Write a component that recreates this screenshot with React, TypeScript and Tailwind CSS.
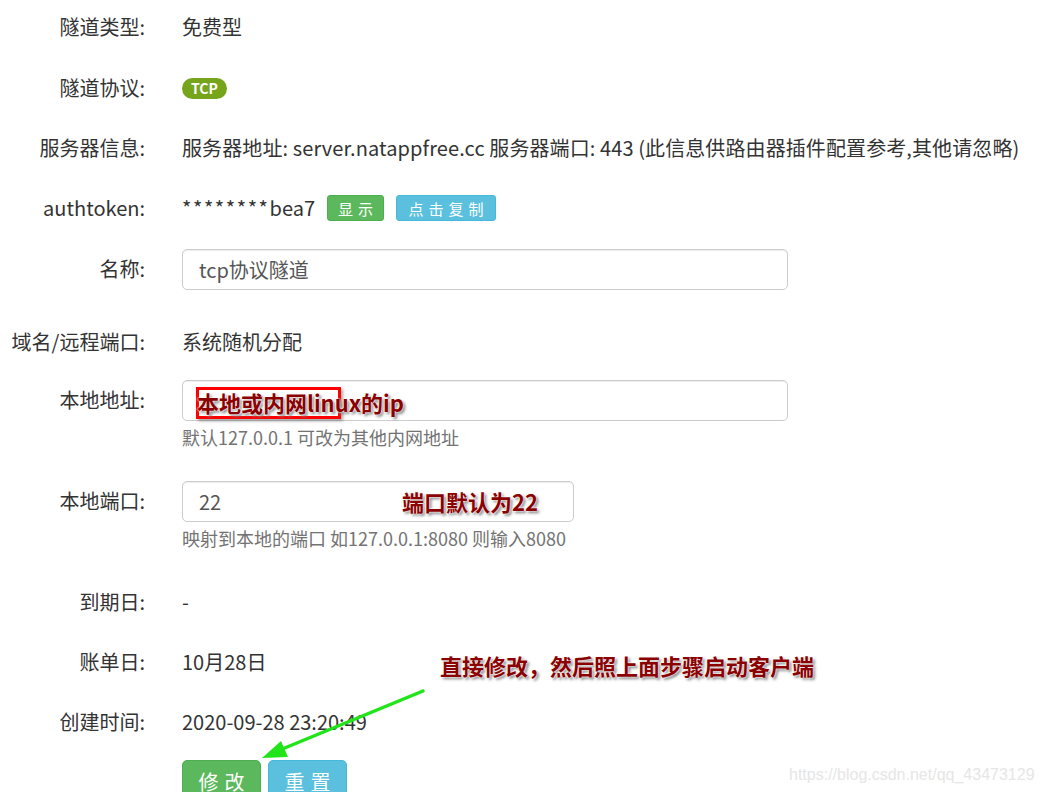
import React from 'react';

const font = { fontFamily: '"Noto Sans CJK SC", "Noto Sans", sans-serif' };

function Label({ children }: { children: React.ReactNode }) {
  return (
    <div className="w-[145px] shrink-0 h-[40px] flex items-center justify-end text-[#333] whitespace-nowrap">
      {children}
    </div>
  );
}

function Row({ label, children, className = '' }: { label: string; children: React.ReactNode; className?: string }) {
  return (
    <div className={`flex gap-[37px] ${className}`}>
      <Label>{label}</Label>
      <div className="flex-1 min-w-0">{children}</div>
    </div>
  );
}

const annot =
  'text-[#8b0000] font-bold text-[22px] leading-none whitespace-nowrap [text-shadow:0_0_2px_#fff,0_0_2px_#fff,2px_2px_3px_#777]';

export default function App() {
  return (
    <div
      className="relative w-[1042px] h-[792px] overflow-hidden bg-white text-[20px] text-[#333]"
      style={font}
    >
      <div className="pt-[7px]">
        <Row label="隧道类型:">
          <div className="h-[40px] flex items-center">免费型</div>
        </Row>

        <Row label="隧道协议:" className="mt-[21px]">
          <div className="h-[40px] flex items-center">
            <span className="inline-flex items-center justify-center h-[21px] px-[9px] rounded-full bg-[#76a51c] text-white text-[14px] font-bold leading-none">
              TCP
            </span>
          </div>
        </Row>

        <Row label="服务器信息:" className="mt-[20px]">
          <div className="h-[40px] flex items-center whitespace-nowrap tracking-[0.1px]">
            服务器地址: server.natappfree.cc 服务器端口: 443 (此信息供路由器插件配置参考,其他请忽略)
          </div>
        </Row>

        <Row label="authtoken:" className="mt-[20px]">
          <div className="h-[40px] flex items-center gap-[12px]">
            <span>
              <span className="tracking-[1.6px]">********</span>bea7
            </span>
            <button className="h-[26px] w-[57px] rounded-[3px] bg-[#5cb85c] border border-[#4cae4c] text-white text-[15px] tracking-[5px] pl-[5px] leading-none">
              显示
            </button>
            <button className="h-[26px] w-[100px] rounded-[3px] bg-[#5bc0de] border border-[#46b8da] text-white text-[15px] tracking-[5px] pl-[5px] leading-none">
              点击复制
            </button>
          </div>
        </Row>

        <Row label="名称:" className="mt-[21px]">
          <div className="w-[606px] h-[41px] border border-[#ccc] rounded-[5px] flex items-center px-[16px] text-[#555] shadow-[inset_0_1px_1px_rgba(0,0,0,0.075)]">
            tcp协议隧道
          </div>
        </Row>

        <Row label="域名/远程端口:" className="mt-[32px]">
          <div className="h-[40px] flex items-center">系统随机分配</div>
        </Row>

        <Row label="本地地址:" className="mt-[18px]">
          <div className="w-[606px] h-[41px] border border-[#ccc] rounded-[5px] shadow-[inset_0_1px_1px_rgba(0,0,0,0.075)]" />
          <div className="mt-[4px] h-[24px] text-[18px] text-[#737373] leading-[24px]">默认127.0.0.1 可改为其他内网地址</div>
        </Row>

        <Row label="本地端口:" className="mt-[32px]">
          <div className="w-[392px] h-[41px] border border-[#ccc] rounded-[5px] flex items-center px-[16px] text-[#555] shadow-[inset_0_1px_1px_rgba(0,0,0,0.075)]">
            22
          </div>
          <div className="mt-[4px] h-[24px] text-[18px] text-[#737373] leading-[24px]">
            映射到本地的端口 如127.0.0.1:8080 则输入8080
          </div>
        </Row>

        <Row label="到期日:" className="mt-[32px]">
          <div className="h-[40px] flex items-center">-</div>
        </Row>

        <Row label="账单日:" className="mt-[20px]">
          <div className="h-[40px] flex items-center">10月28日</div>
        </Row>

        <Row label="创建时间:" className="mt-[20px]">
          <div className="h-[40px] flex items-center">2020-09-28 23:20:49</div>
        </Row>

        <Row label="" className="mt-[18px]">
          <div className="flex gap-[7px]">
            <button className="w-[79px] h-[44px] rounded-[5px] bg-[#5cb85c] border border-[#4cae4c] text-white text-[20px] tracking-[6px] pl-[6px] leading-none">
              修改
            </button>
            <button className="w-[79px] h-[44px] rounded-[5px] bg-[#5bc0de] border border-[#46b8da] text-white text-[20px] tracking-[6px] pl-[6px] leading-none">
              重置
            </button>
          </div>
        </Row>
      </div>

      {/* annotations */}
      <div className="absolute left-[196px] top-[387px] w-[145px] h-[32px] border-[3px] border-[#ff0000] bg-white shadow-[2px_2px_3px_rgba(0,0,0,0.35)]" />
      <div className={`absolute left-[197px] top-[391px] ${annot}`}>本地或内网linux的ip</div>
      <div className={`absolute left-[402px] top-[490px] ${annot}`}>端口默认为22</div>
      <div className={`absolute left-[440px] top-[654px] ${annot}`}>直接修改，然后照上面步骤启动客户端</div>

      <svg className="absolute left-0 top-0 pointer-events-none" width="1042" height="792">
        <line x1="423" y1="691" x2="275" y2="752" stroke="#22e41a" strokeWidth="3.5" strokeLinecap="round" />
        <polygon points="262,758 281,741 288,757" fill="#22e41a" />
      </svg>

      <div
        className="absolute left-[789px] top-[763px] text-[16px] text-[#e6e6e6]"
        style={{ fontFamily: '"Liberation Sans", Arial, sans-serif' }}
      >
        https://blog.csdn.net/qq_43473129
      </div>
    </div>
  );
}
